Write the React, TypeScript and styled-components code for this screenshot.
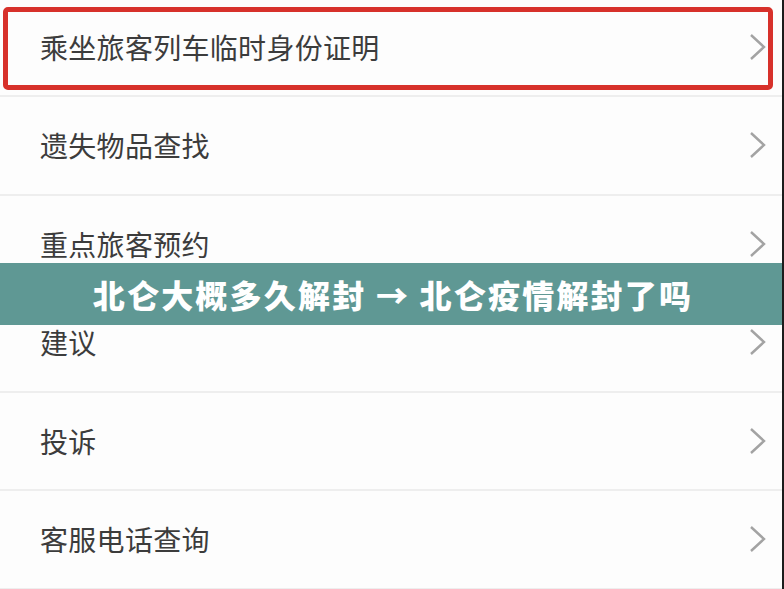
import React from "react";
import styled, { createGlobalStyle } from "styled-components";

const Global = createGlobalStyle`
  html, body { margin: 0; padding: 0; background: #fdfdfd; overflow: hidden; }
  * { box-sizing: border-box; }
`;

const Page = styled.div`
  position: relative;
  width: 784px;
  height: 589px;
  overflow: hidden;
  background: #fdfdfd;
  border-right: 2px solid #1c1c1c;
  font-family: "Noto Sans CJK SC", "Noto Sans", sans-serif;
`;

const List = styled.div`
  display: flex;
  flex-direction: column;
  margin-top: -1.5px;
`;

const Row = styled.div`
  position: relative;
  height: 98.5px;
  display: flex;
  align-items: center;
  justify-content: space-between;
  padding: 0 14px 0 40px;
  border-bottom: 2px solid #eeeeee;
`;

const Label = styled.span`
  font-size: 28px;
  color: #3c3c3c;
  letter-spacing: 0.3px;
`;

const Highlight = styled.div`
  position: absolute;
  left: 3px;
  top: 8.5px;
  width: 770px;
  height: 83px;
  border: 5px solid #d7312b;
  border-radius: 5px;
  pointer-events: none;
`;

const Banner = styled.div`
  position: absolute;
  left: 0;
  right: 0;
  top: 263px;
  height: 62px;
  background: #5f9894;
  display: flex;
  align-items: center;
  justify-content: center;
  padding-left: 4px;
`;

const BannerText = styled.span`
  color: #ffffff;
  font-size: 32px;
  font-weight: 900;
  letter-spacing: 2.2px;
  white-space: pre;
`;

const Chevron = () => (
  <svg width="20" height="28" viewBox="0 0 20 28">
    <path d="M3 2 L16 14 L3 26" fill="none" stroke="#a3a3a3" strokeWidth="2.4" />
  </svg>
);

const items = [
  "乘坐旅客列车临时身份证明",
  "遗失物品查找",
  "重点旅客预约",
  "建议",
  "投诉",
  "客服电话查询",
];

export default function App() {
  return (
    <>
      <Global />
      <Page>
        <List>
          {items.map((t, i) => (
            <Row key={t}>
              <Label>{t}</Label>
              <Chevron />
              {i === 0 && <Highlight />}
            </Row>
          ))}
        </List>
        <Banner>
          <BannerText>北仑大概多久解封 → 北仑疫情解封了吗</BannerText>
        </Banner>
      </Page>
    </>
  );
}
